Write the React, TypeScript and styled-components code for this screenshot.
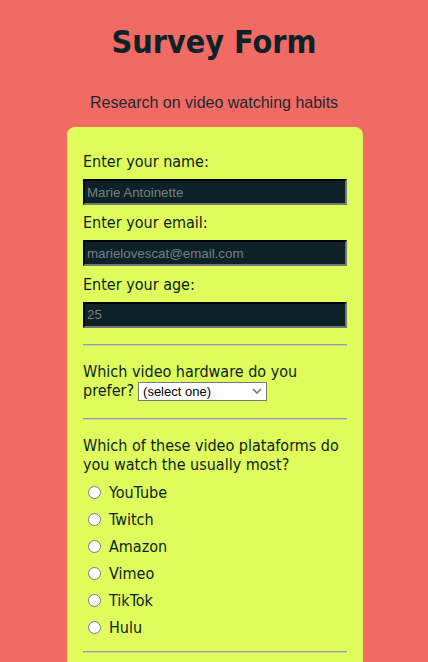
import React from "react";
import styled, { createGlobalStyle } from "styled-components";

const GlobalStyle = createGlobalStyle`
  html, body {
    margin: 0;
    padding: 0;
    background: #f26a64;
  }
  body {
    font-family: "DejaVu Sans", Verdana, sans-serif;
    font-stretch: condensed;
    color: #0b2328;
  }
`;

const Page = styled.main`
  display: flex;
  flex-direction: column;
  align-items: center;
  padding-top: 23px;
`;

const Title = styled.h1`
  margin: 0;
  font-family: "DejaVu Sans Condensed", "DejaVu Sans", sans-serif;
  font-stretch: condensed;
  font-weight: 700;
  font-size: 32px;
  line-height: 39px;
  color: #0b2328;
`;

const Subtitle = styled.p`
  margin: 32px 0 15px;
  font-family: "Liberation Sans", Arial, sans-serif;
  font-size: 16px;
  line-height: 18px;
  color: #1b2a30;
`;

const Card = styled.form`
  box-sizing: border-box;
  width: 296px;
  margin-left: 2px;
  background: #e0fc5c;
  border-radius: 8px;
  padding: 25px 16px 0;
  display: flex;
  flex-direction: column;
`;

const Label = styled.label`
  font-family: "DejaVu Sans Condensed", "DejaVu Sans", sans-serif;
  font-stretch: condensed;
  font-size: 16px;
  line-height: 19px;
  margin-bottom: 8px;
`;

const TextInput = styled.input`
  box-sizing: border-box;
  width: 100%;
  height: 26px;
  margin: 0 0 8.3px;
  padding: 1px 2px;
  background: #0c2228;
  border: 2px inset #767676;
  border-top-color: #1c1c1c;
  border-left-color: #1c1c1c;
  font-family: "Liberation Sans", Arial, sans-serif;
  font-size: 13.33px;
  color: #ddd;
  &::placeholder {
    color: #7a7f80;
  }
`;

const Rule = styled.hr`
  width: 100%;
  margin: 8px 0 0;
  border: 0;
  border-top: 1px solid #9a9a9a;
  border-bottom: 1px solid #c8cfa0;
`;

const Question = styled.div`
  font-family: "DejaVu Sans Condensed", "DejaVu Sans", sans-serif;
  font-stretch: condensed;
  font-size: 16px;
  line-height: 19px;
  margin-top: 16px;
`;

const SelectWrap = styled.span`
  position: relative;
  display: inline-block;
  margin-left: 4px;
  vertical-align: middle;
  line-height: 0;
`;

const Select = styled.select`
  box-sizing: border-box;
  width: 129px;
  height: 19px;
  padding: 0 20px 0 4px;
  background: #fff;
  border: 1px solid #767676;
  border-radius: 0;
  appearance: none;
  -webkit-appearance: none;
  font-family: "Liberation Sans", Arial, sans-serif;
  font-size: 13px;
  color: #000;
`;

const Chevron = styled.svg`
  position: absolute;
  right: 5px;
  top: 6px;
  pointer-events: none;
`;

const Options = styled.div`
  display: flex;
  flex-direction: column;
  margin-top: 9px;
  gap: 8px;
  margin-bottom: 6px;
`;

const RadioRow = styled.label`
  display: flex;
  align-items: center;
  gap: 8px;
  padding-left: 5px;
  font-family: "DejaVu Sans Condensed", "DejaVu Sans", sans-serif;
  font-stretch: condensed;
  font-size: 16px;
  line-height: 19px;
`;

const Radio = styled.input`
  width: 13px;
  height: 13px;
  margin: 0;
`;

const SelectRule = styled(Rule)`
  margin-top: 17.5px;
`;

const CardBottom = styled.div`
  height: 40px;
`;

const platforms = ["YouTube", "Twitch", "Amazon", "Vimeo", "TikTok", "Hulu"];

export default function App() {
  return (
    <>
      <GlobalStyle />
      <Page>
        <Title>Survey Form</Title>
        <Subtitle>Research on video watching habits</Subtitle>
        <Card onSubmit={(e) => e.preventDefault()}>
          <Label htmlFor="name">Enter your name:</Label>
          <TextInput id="name" type="text" placeholder="Marie Antoinette" />
          <Label htmlFor="email">Enter your email:</Label>
          <TextInput id="email" type="email" placeholder="marielovescat@email.com" />
          <Label htmlFor="age">Enter your age:</Label>
          <TextInput id="age" type="number" placeholder="25" />
          <Rule />
          <Question>
            Which video hardware do you prefer?
            <SelectWrap>
              <Select defaultValue="">
                <option value="">(select one)</option>
                <option>TV</option>
                <option>Computer</option>
                <option>Smartphone</option>
              </Select>
              <Chevron width="10" height="6" viewBox="0 0 10 6">
                <path d="M1 1 L5 5 L9 1" fill="none" stroke="#707070" strokeWidth="1.5" />
              </Chevron>
            </SelectWrap>
          </Question>
          <SelectRule />
          <Question>Which of these video plataforms do you watch the usually most?</Question>
          <Options>
            {platforms.map((p) => (
              <RadioRow key={p}>
                <Radio type="radio" name="platform" value={p} />
                {p}
              </RadioRow>
            ))}
          </Options>
          <Rule />
          <CardBottom />
        </Card>
      </Page>
    </>
  );
}
